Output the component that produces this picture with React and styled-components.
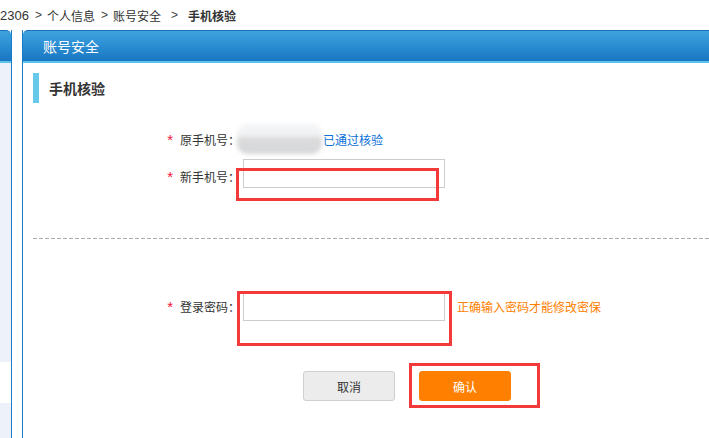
import React from 'react';
import styled, { createGlobalStyle } from 'styled-components';

const GlobalStyle = createGlobalStyle`
  html, body {
    margin: 0;
    padding: 0;
    background: #fff;
  }
  body {
    font-family: "Noto Sans CJK SC", "Liberation Sans", sans-serif;
    font-size: 12px;
    color: #333;
  }
`;

const Page = styled.div`
  position: relative;
  width: 709px;
  height: 438px;
  overflow: hidden;
`;

const Crumbs = styled.div`
  display: flex;
  align-items: center;
  height: 30px;
  font-size: 12px;
  color: #333;
  white-space: nowrap;
`;

const Crumb = styled.span`
  font-weight: ${({ $current }) => ($current ? 700 : 400)};
  font-family: ${({ $num }) => ($num ? '"Liberation Sans", sans-serif' : 'inherit')};
  font-size: ${({ $num }) => ($num ? '13px' : '12px')};
`;

const Sep = styled.span`
  margin: 0 ${({ $wide }) => ($wide ? '10px' : '5px')} 0 ${({ $wide }) => ($wide ? '10px' : '6px')};
  color: #444;
  font-family: "Liberation Sans", sans-serif;
`;

const Columns = styled.div`
  display: flex;
  gap: 10px;
  height: 408px;
`;

const headerGradient = `
  background: linear-gradient(to bottom, #3ea3df 0%, #2a8dd2 50%, #1a76c1 100%);
  border-top: 1px solid #1a6fb8;
`;

const SidePanel = styled.div`
  display: flex;
  flex-direction: column;
  width: 11px;
  border-right: 1px solid #1a7bc8;
`;

const SideHeader = styled.div`
  ${headerGradient}
  height: 30px;
  border-top-right-radius: 5px;
  border-bottom: 2px solid #5cc3ec;
`;

const SideFill = styled.div`
  height: ${({ $h }) => $h}px;
  flex: ${({ $h }) => ($h ? 'none' : 1)};
  background: ${({ $white }) => ($white ? '#fff' : '#edf1f9')};
`;

const MainPanel = styled.div`
  flex: 1;
  margin-right: -20px;
  border-left: 1px solid #1a7bc8;
  display: flex;
  flex-direction: column;
`;

const MainHeader = styled.div`
  ${headerGradient}
  height: 30px;
  border-top-left-radius: 5px;
  border-bottom: 2px solid #5cc3ec;
  display: flex;
  align-items: center;
  padding-left: 20px;
  color: #fff;
  font-size: 14px;
`;

const SectionTitle = styled.div`
  display: flex;
  align-items: center;
  margin: 10px 0 0 10px;
  height: 30px;
  font-size: 14px;
  font-weight: 700;
  color: #333;

  &::before {
    content: '';
    width: 6px;
    height: 30px;
    background: #66c9ea;
    margin-right: 10px;
  }
`;

const Form = styled.div`
  display: flex;
  flex-direction: column;
`;

const Row = styled.div`
  display: flex;
  align-items: center;
  padding-left: 137px;
  margin-top: ${({ $top }) => $top}px;
  height: ${({ $h }) => $h}px;
`;

const Label = styled.label`
  width: 80px;
  margin-right: 3px;
  display: flex;
  justify-content: flex-end;
  align-items: center;
  padding-top: ${({ $shift }) => $shift || 0}px;
  white-space: nowrap;
  color: #333;

  &::before {
    content: '*';
    color: #f0143c;
    font-family: "Liberation Sans", sans-serif;
    font-size: 15px;
    margin-right: 7px;
  }
`;

const Blurred = styled.div`
  width: 85px;
  height: 30px;
  margin-left: -6px;
  border-radius: 10px;
  background: linear-gradient(
    to bottom,
    #f4f5f7 0%,
    #f1f2f4 40%,
    #dcdcdd 45%,
    #d6d7d9 100%
  );
  filter: blur(2px);
`;

const Verified = styled.span`
  margin-left: 1px;
  color: #0a6fd8;
`;

const Input = styled.input`
  box-sizing: border-box;
  width: 202px;
  height: 29px;
  border: 1px solid #ccc;
  outline: none;
  padding: 0 6px;
  font: inherit;
`;

const Hint = styled.span`
  margin-left: 12px;
  color: #ff8000;
  white-space: nowrap;
`;

const Divider = styled.div`
  margin: 50px 0 0 10px;
  height: 1px;
  background: repeating-linear-gradient(to right, #aaa 0 4px, transparent 4px 6px);
`;

const Actions = styled.div`
  display: flex;
  gap: 24px;
  padding-left: 280px;
  margin-top: 50px;
`;

const Button = styled.button`
  box-sizing: border-box;
  width: 92px;
  height: 30px;
  border-radius: 3px;
  font: inherit;
  font-size: 12px;
  cursor: pointer;
  border: 1px solid ${({ $primary }) => ($primary ? '#ff8000' : '#cfcfcf')};
  background: ${({ $primary }) => ($primary ? '#ff8000' : '#ececec')};
  color: ${({ $primary }) => ($primary ? '#fff' : '#333')};
`;

const Mark = styled.div`
  position: absolute;
  box-sizing: border-box;
  border: 3px solid #f23a3a;
  pointer-events: none;
`;

const MARKS = [
  { left: 236, top: 168, width: 203, height: 33 },
  { left: 237, top: 291, width: 215, height: 55 },
  { left: 409, top: 363, width: 131, height: 45 },
];

const App = () => (
  <Page>
    <GlobalStyle />
    <Crumbs>
      <Crumb $num>2306</Crumb>
      <Sep>&gt;</Sep>
      <Crumb>个人信息</Crumb>
      <Sep>&gt;</Sep>
      <Crumb>账号安全</Crumb>
      <Sep $wide>&gt;</Sep>
      <Crumb $current>手机核验</Crumb>
    </Crumbs>

    <Columns>
      <SidePanel>
        <SideHeader />
        <SideFill />
        <SideFill $h={41} $white />
        <SideFill $h={35} />
      </SidePanel>

      <MainPanel>
        <MainHeader>账号安全</MainHeader>
        <SectionTitle>手机核验</SectionTitle>

        <Form>
          <Row $top={20} $h={32}>
            <Label>原手机号：</Label>
            <Blurred />
            <Verified>已通过核验</Verified>
          </Row>
          <Row $top={4} $h={29}>
            <Label $shift={5}>新手机号：</Label>
            <Input type="text" />
          </Row>

          <Divider />

          <Row $top={53} $h={29}>
            <Label>登录密码：</Label>
            <Input type="password" />
            <Hint>正确输入密码才能修改密保</Hint>
          </Row>

          <Actions>
            <Button type="button">取消</Button>
            <Button type="button" $primary>确认</Button>
          </Actions>
        </Form>
      </MainPanel>
    </Columns>

    {MARKS.map((m) => (
      <Mark key={`${m.left}-${m.top}`} style={m} />
    ))}
  </Page>
);

export default App;
